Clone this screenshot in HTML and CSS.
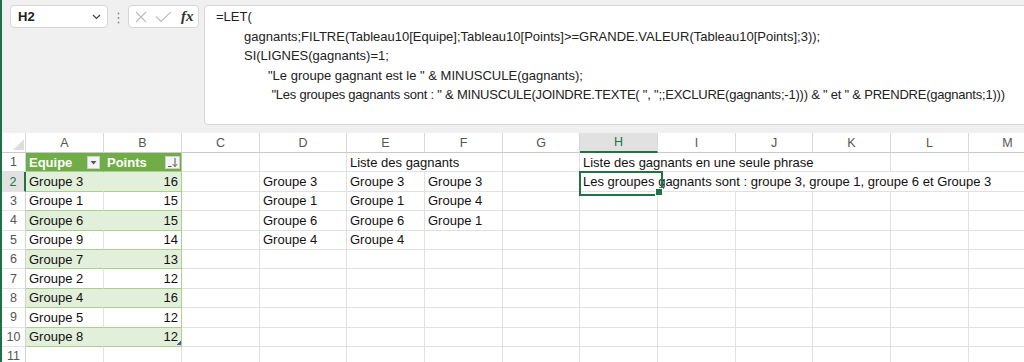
FILE: index.html
```html
<!DOCTYPE html>
<html lang="fr">

<head>
    <meta charset="UTF-8">
    <title>Classeur - Liste des gagnants</title>
    <link rel="stylesheet" href="styles.css">
</head>

<body>
    <div class="app">
        <div class="fbar">
            <div class="namebox">
                <span>H2</span>
                <svg width="9" height="6" viewBox="0 0 9 6"><path d="M1 1 L4.5 4.5 L8 1" fill="none" stroke="#444" stroke-width="1.2"/></svg>
            </div>
            <div class="grip">
                <svg width="3" height="12" viewBox="0 0 3 12"><circle cx="1.5" cy="1.5" r="0.9" fill="#8a8a8a"/><circle cx="1.5" cy="6" r="0.9" fill="#8a8a8a"/><circle cx="1.5" cy="10.5" r="0.9" fill="#8a8a8a"/></svg>
            </div>
            <div class="fxbox">
                <svg width="12" height="12" viewBox="0 0 12 12"><path d="M1 1 L11 11 M11 1 L1 11" stroke="#bcbcbc" stroke-width="1.1"/></svg>
                <svg width="17" height="12" viewBox="0 0 17 12"><path d="M1 5.5 L6 10.5 L16 0.8" fill="none" stroke="#bcbcbc" stroke-width="1.1"/></svg>
                <span class="fx">fx</span>
            </div>
            <div class="formula">
                <div class="fl">=LET(</div>
                <div class="fl in1">gagnants;FILTRE(Tableau10[Equipe];Tableau10[Points]&gt;=GRANDE.VALEUR(Tableau10[Points];3));</div>
                <div class="fl in1">SI(LIGNES(gagnants)=1;</div>
                <div class="fl in2">"Le groupe gagnant est le " &amp; MINUSCULE(gagnants);</div>
                <div class="fl in2 tight"> "Les groupes gagnants sont : " &amp; MINUSCULE(JOINDRE.TEXTE( ", ";;EXCLURE(gagnants;-1))) &amp; " et " &amp; PRENDRE(gagnants;1)))</div>
            </div>
        </div>

        <div class="sheet">
            <table class="grid">
                <colgroup>
                    <col class="w-rh">
                    <col class="w78"><col class="w78"><col class="w78"><col class="w87">
                    <col class="w78"><col class="w78"><col class="w77"><col class="w78">
                    <col class="w78"><col class="w77"><col class="w78"><col class="w78"><col class="w78">
                </colgroup>
                <tr class="colhead">
                    <th class="corner"><svg width="24" height="19" viewBox="0 0 24 19"><path d="M22 6 L22 17 L11 17 Z" fill="#dedede"/></svg></th>
                    <th>A</th><th>B</th><th>C</th><th>D</th><th>E</th><th>F</th><th>G</th>
                    <th class="sel">H</th><th>I</th><th>J</th><th>K</th><th>L</th><th>M</th>
                </tr>
                <tr class="head">
                    <th class="rn">1</th>
                    <td class="t a"><div class="hcell"><span>Equipe</span><span class="fbtn"><svg width="11" height="11" viewBox="0 0 11 11"><path d="M2.5 4 L8.5 4 L5.5 7.5 Z" fill="#555"/></svg></span></div></td>
                    <td class="t b"><div class="hcell"><span>Points</span><span class="fbtn sort"><svg width="13" height="11" viewBox="0 0 13 11"><path d="M2 9.5 L5.5 9.5" stroke="#555" stroke-width="1"/><path d="M9 1 L9 9.5 M6.8 7.2 L9 9.6 L11.2 7.2" fill="none" stroke="#555" stroke-width="1"/></svg></span></div></td>
                    <td></td><td></td>
                    <td colspan="2" class="spill">Liste des gagnants</td>
                    <td></td>
                    <td colspan="4" class="spill">Liste des gagnants en une seule phrase</td>
                    <td></td><td></td>
                </tr>
                <tr class="band">
                    <th class="rn sel">2</th>
                    <td class="t a">Groupe 3</td><td class="t b">16</td><td></td>
                    <td>Groupe 3</td><td>Groupe 3</td><td>Groupe 3</td><td></td>
                    <td colspan="6" class="spill active">Les groupes gagnants sont : groupe 3, groupe 1, groupe 6 et Groupe 3</td>
                </tr>
                <tr>
                    <th class="rn">3</th>
                    <td class="t a">Groupe 1</td><td class="t b">15</td><td></td>
                    <td>Groupe 1</td><td>Groupe 1</td><td>Groupe 4</td>
                    <td></td><td></td><td></td><td></td><td></td><td></td><td></td>
                </tr>
                <tr class="band">
                    <th class="rn">4</th>
                    <td class="t a">Groupe 6</td><td class="t b">15</td><td></td>
                    <td>Groupe 6</td><td>Groupe 6</td><td>Groupe 1</td>
                    <td></td><td></td><td></td><td></td><td></td><td></td><td></td>
                </tr>
                <tr>
                    <th class="rn">5</th>
                    <td class="t a">Groupe 9</td><td class="t b">14</td><td></td>
                    <td>Groupe 4</td><td>Groupe 4</td><td></td>
                    <td></td><td></td><td></td><td></td><td></td><td></td><td></td>
                </tr>
                <tr class="band">
                    <th class="rn">6</th>
                    <td class="t a">Groupe 7</td><td class="t b">13</td>
                    <td></td><td></td><td></td><td></td><td></td><td></td><td></td><td></td><td></td><td></td><td></td>
                </tr>
                <tr>
                    <th class="rn">7</th>
                    <td class="t a">Groupe 2</td><td class="t b">12</td>
                    <td></td><td></td><td></td><td></td><td></td><td></td><td></td><td></td><td></td><td></td><td></td>
                </tr>
                <tr class="band">
                    <th class="rn">8</th>
                    <td class="t a">Groupe 4</td><td class="t b">16</td>
                    <td></td><td></td><td></td><td></td><td></td><td></td><td></td><td></td><td></td><td></td><td></td>
                </tr>
                <tr>
                    <th class="rn">9</th>
                    <td class="t a">Groupe 5</td><td class="t b">12</td>
                    <td></td><td></td><td></td><td></td><td></td><td></td><td></td><td></td><td></td><td></td><td></td>
                </tr>
                <tr class="band">
                    <th class="rn">10</th>
                    <td class="t a">Groupe 8</td><td class="t b resize">12</td>
                    <td></td><td></td><td></td><td></td><td></td><td></td><td></td><td></td><td></td><td></td><td></td>
                </tr>
                <tr>
                    <th class="rn">11</th>
                    <td></td><td></td><td></td><td></td><td></td><td></td><td></td><td></td><td></td><td></td><td></td><td></td><td></td>
                </tr>
            </table>
        </div>
    </div>
</body>

</html>
```

FILE: styles.css
```css
* {
    box-sizing: border-box;
}

body {
    margin: 0;
    overflow: hidden;
    background: #fff;
    color: #111;
    font: normal 13px "Liberation Sans", Arial, sans-serif;
}

.app {
    height: 362px;
    overflow: hidden;
    border-left: 2px solid #1e7145;
}

/* formula bar */

.fbar {
    display: flex;
    align-items: flex-start;
    height: 133px;
    padding: 5px 0 0 8px;
    background: #f0f0f0;
}

.namebox {
    display: flex;
    align-items: center;
    justify-content: space-between;
    width: 98px;
    height: 23px;
    padding: 0 6px 0 7px;
    border: 1px solid #d6d6d6;
    border-radius: 4px;
    background: #fff;
    font-weight: bold;
    font-size: 13px;
    color: #222;
}

.grip {
    display: flex;
    justify-content: center;
    width: 20px;
    padding-top: 7px;
}

.fxbox {
    display: flex;
    align-items: center;
    gap: 8px;
    width: 71px;
    height: 23px;
    padding: 0 0 0 6px;
    border: 1px solid #d6d6d6;
    border-radius: 4px;
    background: #fff;
}

.fx {
    margin-left: 1px;
    font: italic bold 15px "Liberation Serif", serif;
    color: #333;
}

.formula {
    flex: 1;
    height: 120px;
    margin: 0 -8px 0 5px;
    padding: 1px 0 0 11px;
    border: 1px solid #d6d6d6;
    border-radius: 4px;
    background: #fff;
    color: #222;
    line-height: 19.6px;
}

.fl {
    white-space: pre;
}

.in1 {
    padding-left: 28px;
}

.in2 {
    padding-left: 52px;
}

.tight {
    letter-spacing: -0.22px;
}

/* sheet grid */

.sheet {
    overflow: hidden;
}

.grid {
    table-layout: fixed;
    border-collapse: separate;
    border-spacing: 0;
    width: 1045px;
}

.w-rh { width: 24px; }
.w77 { width: 77px; }
.w78 { width: 78px; }
.w87 { width: 87px; }

.grid tr {
    height: 19.4px;
}

.grid tr.colhead {
    height: 19px;
}

.grid th {
    padding: 0;
    font-weight: normal;
    font-size: 12.5px;
    color: #555;
    text-align: center;
    background: #fff;
}

.colhead th {
    border-right: 1px solid #d8d8d8;
    border-bottom: 1px solid #c9c9c9;
}

.colhead th.sel {
    background: #e1e1e1;
    color: #217346;
    border-bottom: 2px solid #217346;
}

.corner svg {
    display: block;
}

.rn {
    border-right: 1px solid #d4d4d4;
    border-bottom: 1px solid #e3e3e3;
}

.grid th.rn.sel {
    background: #e1e1e1;
    color: #217346;
    border-right: 2px solid #217346;
}

.grid td {
    padding: 0 3px;
    white-space: nowrap;
    overflow: hidden;
    vertical-align: middle;
    border-right: 1px solid #e1e1e1;
    border-bottom: 1px solid #e1e1e1;
}

.grid td.spill {
    overflow: visible;
}

/* table Tableau10 */

.grid td.t {
    border-bottom-color: #a9d08e;
}

.band td.t {
    background: #e2efda;
}

.band td.a,
.head td.a {
    border-right-color: transparent;
}

.grid td.b {
    text-align: right;
    border-right-color: #a9d08e;
}

.head td.t {
    background: #70ad47;
    color: #fff;
    font-weight: bold;
    padding-right: 1px;
}

.hcell {
    display: flex;
    align-items: center;
    justify-content: space-between;
}

.fbtn {
    display: flex;
    align-items: center;
    justify-content: center;
    width: 13px;
    height: 13px;
    margin-right: 2px;
    border: 1px solid #cfcfcf;
    background: #f4f4f4;
}

.fbtn.sort {
    width: 15px;
    margin-right: 0;
}

.resize {
    position: relative;
}

.resize::after {
    content: '';
    position: absolute;
    right: 0;
    bottom: 1px;
    width: 4px;
    height: 4px;
    background: linear-gradient(135deg, transparent 50%, #3e5fa8 50%);
}

/* active cell H2 */

.grid td.active {
    position: relative;
}

.active::after {
    content: '';
    position: absolute;
    left: -1px;
    top: -1px;
    width: 80px;
    height: 21px;
    border: 2px solid #217346;
}

.active::before {
    content: '';
    position: absolute;
    left: 75px;
    top: 16px;
    width: 6px;
    height: 6px;
    background: #217346;
    border: 1px solid #fff;
    z-index: 1;
}
```
